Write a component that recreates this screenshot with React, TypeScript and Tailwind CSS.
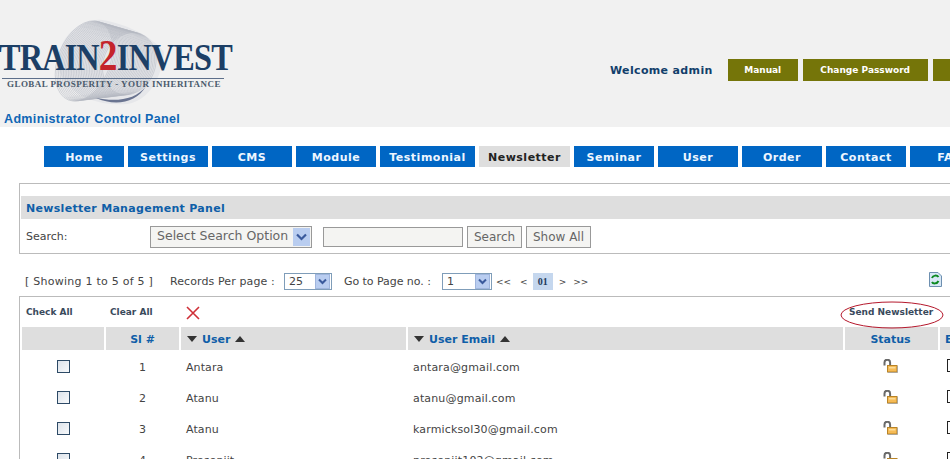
const sans = "font-['DejaVu_Sans',Verdana,sans-serif]";

function Chevron() {
  return (
    <span className="w-[15px] h-[15px] bg-[#b9cdf0] border border-[#9fb5dd] flex items-center justify-center">
      <svg width="9" height="7" viewBox="0 0 9 7">
        <path d="M1 1.5 L4.5 5 L8 1.5" fill="none" stroke="#3a5a9c" strokeWidth="2" />
      </svg>
    </span>
  );
}

function Sel({ label, w }: { label: string; w: string }) {
  return (
    <span className={`${w} h-[17px] shrink-0 border border-[#7f9db9] bg-white text-[#444] flex items-center justify-between pl-1 pr-px text-[11px]`}>
      <span className="pt-px">{label}</span>
      <Chevron />
    </span>
  );
}

function Logo() {
  const rings = Array.from({ length: 30 }, (_, i) => i);
  return (
    <div className="relative h-[100px] w-[240px]">
      <svg className="absolute left-[50px] top-[12px]" width="125" height="92" viewBox="0 0 125 92">
        <path d="M8 42 C12 16 34 2 52 4 C78 8 104 22 114 36 C112 60 100 84 78 88 C50 90 30 82 20 70 C10 60 6 52 8 42 Z" fill="#e6e7ea" />
        {rings.map((i) => (
          <ellipse
            key={i}
            cx={34 + i * 1.6}
            cy={45 + i * 0.1}
            rx={26}
            ry={42 - i * 0.35}
            transform={`rotate(22 ${34 + i * 1.6} 45)`}
            fill="none"
            stroke="#b4b8c2"
            strokeWidth="0.5"
          />
        ))}
        <path d="M46 82 C64 90 86 88 96 70 C86 84 66 86 46 82 Z" fill="#6a7490" />
      </svg>
      <div className="absolute left-[-1px] top-[32px] origin-left scale-x-[0.85] font-['Liberation_Serif',serif] font-bold text-[38px] leading-[40px] tracking-[-1px] text-[#1c3f66] whitespace-nowrap">
        TRAIN<span className="text-[#c4242b] text-[44px] leading-[40px]">2</span>INVEST
      </div>
      <div className="absolute left-[2px] top-[74px] w-[222px] h-px bg-[#5d6f8a]" />
      <div className="absolute left-[7px] top-[75px] font-['Liberation_Serif',serif] font-bold text-[9px] leading-[11px] tracking-[0.45px] text-[#4a5a6c] whitespace-nowrap">
        GLOBAL PROSPERITY - YOUR INHERITANCE
      </div>
    </div>
  );
}

const navItems = ["Home", "Settings", "CMS", "Module", "Testimonial", "Newsletter", "Seminar", "User", "Order", "Contact", "FAQ"];

function Th({ w, children, center }: { w: string; children?: React.ReactNode; center?: boolean }) {
  return (
    <div className={`${w} shrink-0 h-[23px] bg-[#dedede] flex items-center gap-[5px] ${center ? "justify-center" : "pl-[6px]"} text-[11px] font-bold text-[#0f5ea8]`}>
      {children}
    </div>
  );
}

const Down = () => <svg width="10" height="6" viewBox="0 0 10 6"><path d="M0 0H10L5 6Z" fill="#333" /></svg>;
const Up = () => <svg width="10" height="6" viewBox="0 0 10 6"><path d="M0 6H10L5 0Z" fill="#333" /></svg>;

function Lock() {
  return (
    <svg width="15" height="14" viewBox="0 0 15 14">
      <path d="M1.5 6.5 V3.5 a2.8 2.8 0 0 1 5.6 0 V6" fill="none" stroke="#6a6a6a" strokeWidth="2" />
      <rect x="4.5" y="6.5" width="9.5" height="6.5" fill="#f6bb55" stroke="#b88326" strokeWidth="1" />
      <rect x="6" y="8" width="6.5" height="1.5" fill="#fbdc98" />
      <path d="M5 13.5 H14.5 V7" fill="none" stroke="#999" strokeWidth="0.7" />
    </svg>
  );
}

const rows = [
  ["1", "Antara", "antara@gmail.com"],
  ["2", "Atanu", "atanu@gmail.com"],
  ["3", "Atanu", "karmicksol30@gmail.com"],
  ["4", "Prosenjit", "prosenjit102@gmail.com"],
];

export default function App() {
  return (
    <div className={`${sans} w-[950px] h-[459px] overflow-hidden bg-white text-[11px] text-[#444]`}>
      <header className="h-[127px] bg-[#f1f1f1] flex">
        <div className="w-[300px] shrink-0 flex flex-col">
          <div className="pt-[4px] h-[112px]"><Logo /></div>
          <div className="pl-[4px] font-['Liberation_Sans',Arial,sans-serif] font-bold text-[12.5px] leading-[15px] tracking-[0.35px] text-[#0f66b5]">Administrator Control Panel</div>
        </div>
        <div className="flex items-start pl-[310px] pt-[59px] whitespace-nowrap">
          <span className="font-bold text-[11px] leading-[22px] pt-px tracking-[0.35px] text-[#123f6b] mr-[15px]">Welcome admin</span>
          <span className="w-[70px] h-[22px] pt-[2px] shrink-0 bg-[#757509] text-white font-bold text-[9px] flex items-center justify-center mr-[5px]">Manual</span>
          <span className="w-[125px] h-[22px] pt-[2px] shrink-0 bg-[#757509] text-white font-bold text-[9px] flex items-center justify-center mr-[5px]">Change Password</span>
          <span className="w-[70px] h-[22px] pt-[2px] shrink-0 bg-[#757509] text-white font-bold text-[9px] flex items-center justify-center">Logout</span>
        </div>
      </header>

      <nav className="flex gap-[4px] pl-[44px] pt-[19px] h-[56px] whitespace-nowrap">
        {navItems.map((n) => (
          <span key={n} className={`w-[80px] h-[21px] pt-[3px] shrink-0 flex items-center justify-center font-bold text-[11px] tracking-[0.5px] ${n === "Newsletter" ? "w-[91px] bg-[#dedede] text-[#222]" : n === "Testimonial" ? "w-[95px] bg-[#0066c4] text-[#eef6ff]" : "bg-[#0066c4] text-[#eef6ff]"}`}>
            {n}
          </span>
        ))}
      </nav>

      <main className="ml-[19px] w-[960px]">
        <section className="h-[71px] border border-[#bbb] pl-px pt-[12px]">
          <div className="h-[23px] pt-[3px] bg-[#dedede] pl-[5px] flex items-center font-bold text-[11px] tracking-[0.3px] text-[#0f5ea8]">Newsletter Management Panel</div>
          <div className="flex items-center h-[29px] pt-[6px] pl-[5px]">
            <span className="w-[124px] pt-[2px]">Search:</span>
            <span className="w-[162px] h-[22px] shrink-0 border border-[#999] bg-[#f4f4f2] text-[#666] text-[12.5px] flex items-center justify-between pl-[6px] pr-px whitespace-nowrap">
              <span>Select Search Option</span>
              <span className="w-[17px] h-[18px] bg-[#b9cdf0] flex items-center justify-center">
                <svg width="11" height="8" viewBox="0 0 11 8"><path d="M1 1.5 L5.5 6 L10 1.5" fill="none" stroke="#3a5a9c" strokeWidth="2.2" /></svg>
              </span>
            </span>
            <span className="w-[140px] h-[20px] shrink-0 border border-[#999] bg-[#f4f4f2] ml-[11px]" />
            <span className="w-[55px] h-[22px] shrink-0 border border-[#999] bg-[#f4f4f2] text-[#666] text-[12px] flex items-center justify-center ml-[4px]">Search</span>
            <span className="w-[65px] h-[22px] shrink-0 border border-[#999] bg-[#f4f4f2] text-[#666] text-[12px] flex items-center justify-center ml-[4px] whitespace-nowrap">Show All</span>
          </div>
        </section>

        <div className="h-[42px] flex items-center pl-[6px] pt-[13px] whitespace-nowrap relative">
          <span className="w-[145px] pt-[2px] tracking-[0.25px]">[ Showing 1 to 5 of 5 ]</span>
          <span className="mr-[6px] w-[108px] pt-[2px] tracking-[0.1px]">Records Per page :</span>
          <Sel label="25" w="w-[48px]" />
          <span className="ml-[12px] w-[87px] mr-[11px] pt-[2px] tracking-[-0.05px]">Go to Page no. :</span>
          <Sel label="1" w="w-[50px]" />
          <span className="ml-[4px] pt-[2px] text-[9px]">&lt;&lt;</span>
          <span className="ml-[9px] pt-[2px] text-[9px]">&lt;</span>
          <span className="ml-[5px] w-[20px] h-[17px] bg-[#c5d7ee] text-[#223a5c] font-bold text-[10px] font-['Liberation_Serif',serif] flex items-center justify-center">01</span>
          <span className="ml-[6px] pt-[2px] text-[9px]">&gt;</span>
          <span className="ml-[7px] pt-[2px] text-[9px]">&gt;&gt;</span>
          <svg className="absolute left-[910px] top-[18px]" width="13" height="15" viewBox="0 0 13 15">
            <path d="M0.5 0.5 H9 L12.5 4 V14.5 H0.5 Z" fill="#d8e8f6" stroke="#6d8fb0" />
            <path d="M3 6 C4 3 8 3 9.5 5 M9.5 9 C8 12 4 12 3 10" fill="none" stroke="#0d8a22" strokeWidth="2" />
          </svg>
        </div>

        <section className="border-l border-t border-[#bbb] pl-[2px]">
          <div className="h-[30px] pt-[1px] flex items-center relative whitespace-nowrap font-bold text-[9px] text-[#3a4a5c]">
            <span className="ml-[4px] w-[84px]">Check All</span>
            <span className="w-[76px]">Clear All</span>
            <svg width="14" height="14" viewBox="0 0 14 14"><path d="M1 1 L13 13 M13 1 L1 13" stroke="#cf3038" strokeWidth="1.6" /></svg>
            <span className="absolute left-[827px] top-[9px]">Send Newsletter</span>
            <svg className="absolute left-[818px] top-[4px]" width="104" height="28" viewBox="0 0 104 28">
              <ellipse cx="52" cy="14" rx="51" ry="13" fill="none" stroke="#b5182c" strokeWidth="1" />
            </svg>
          </div>
          <div className="flex gap-[2px]">
            <Th w="w-[82px]" />
            <Th w="w-[73px]" center><span className="pt-[3px]">Sl #</span></Th>
            <Th w="w-[225px]"><Down /><span className="pt-[3px]">User</span><Up /></Th>
            <Th w="w-[435px]"><Down /><span className="pt-[3px]">User Email</span><Up /></Th>
            <Th w="w-[93px]" center><span className="pt-[3px] pr-[2px]">Status</span></Th>
            <Th w="w-[60px]"><span className="pt-[3px] -ml-[1px]">Edit</span></Th>
          </div>
          {rows.map(([n, u, e]) => (
            <div key={n} className="flex gap-[2px] h-[31px] items-center">
              <div className="w-[82px] shrink-0 flex justify-center pt-[1px]">
                <span className="w-[13px] h-[13px] border border-[#2d4a66] bg-gradient-to-br from-[#dde3ea] to-[#f7f9fb]" />
              </div>
              <div className="w-[73px] shrink-0 text-center pt-[5px]">{n}</div>
              <div className="w-[225px] shrink-0 pl-[5px] pt-[5px] tracking-[0.1px]">{u}</div>
              <div className="w-[435px] shrink-0 pl-[5px] pt-[5px] tracking-[0.15px]">{e}</div>
              <div className="w-[93px] shrink-0 flex justify-center pr-[2px]"><Lock /></div>
              <div className="w-[60px] shrink-0 pl-[7px]">
                <span className="block w-[12px] h-[13px] border border-[#222] bg-white" />
              </div>
            </div>
          ))}
        </section>
      </main>
    </div>
  );
}
